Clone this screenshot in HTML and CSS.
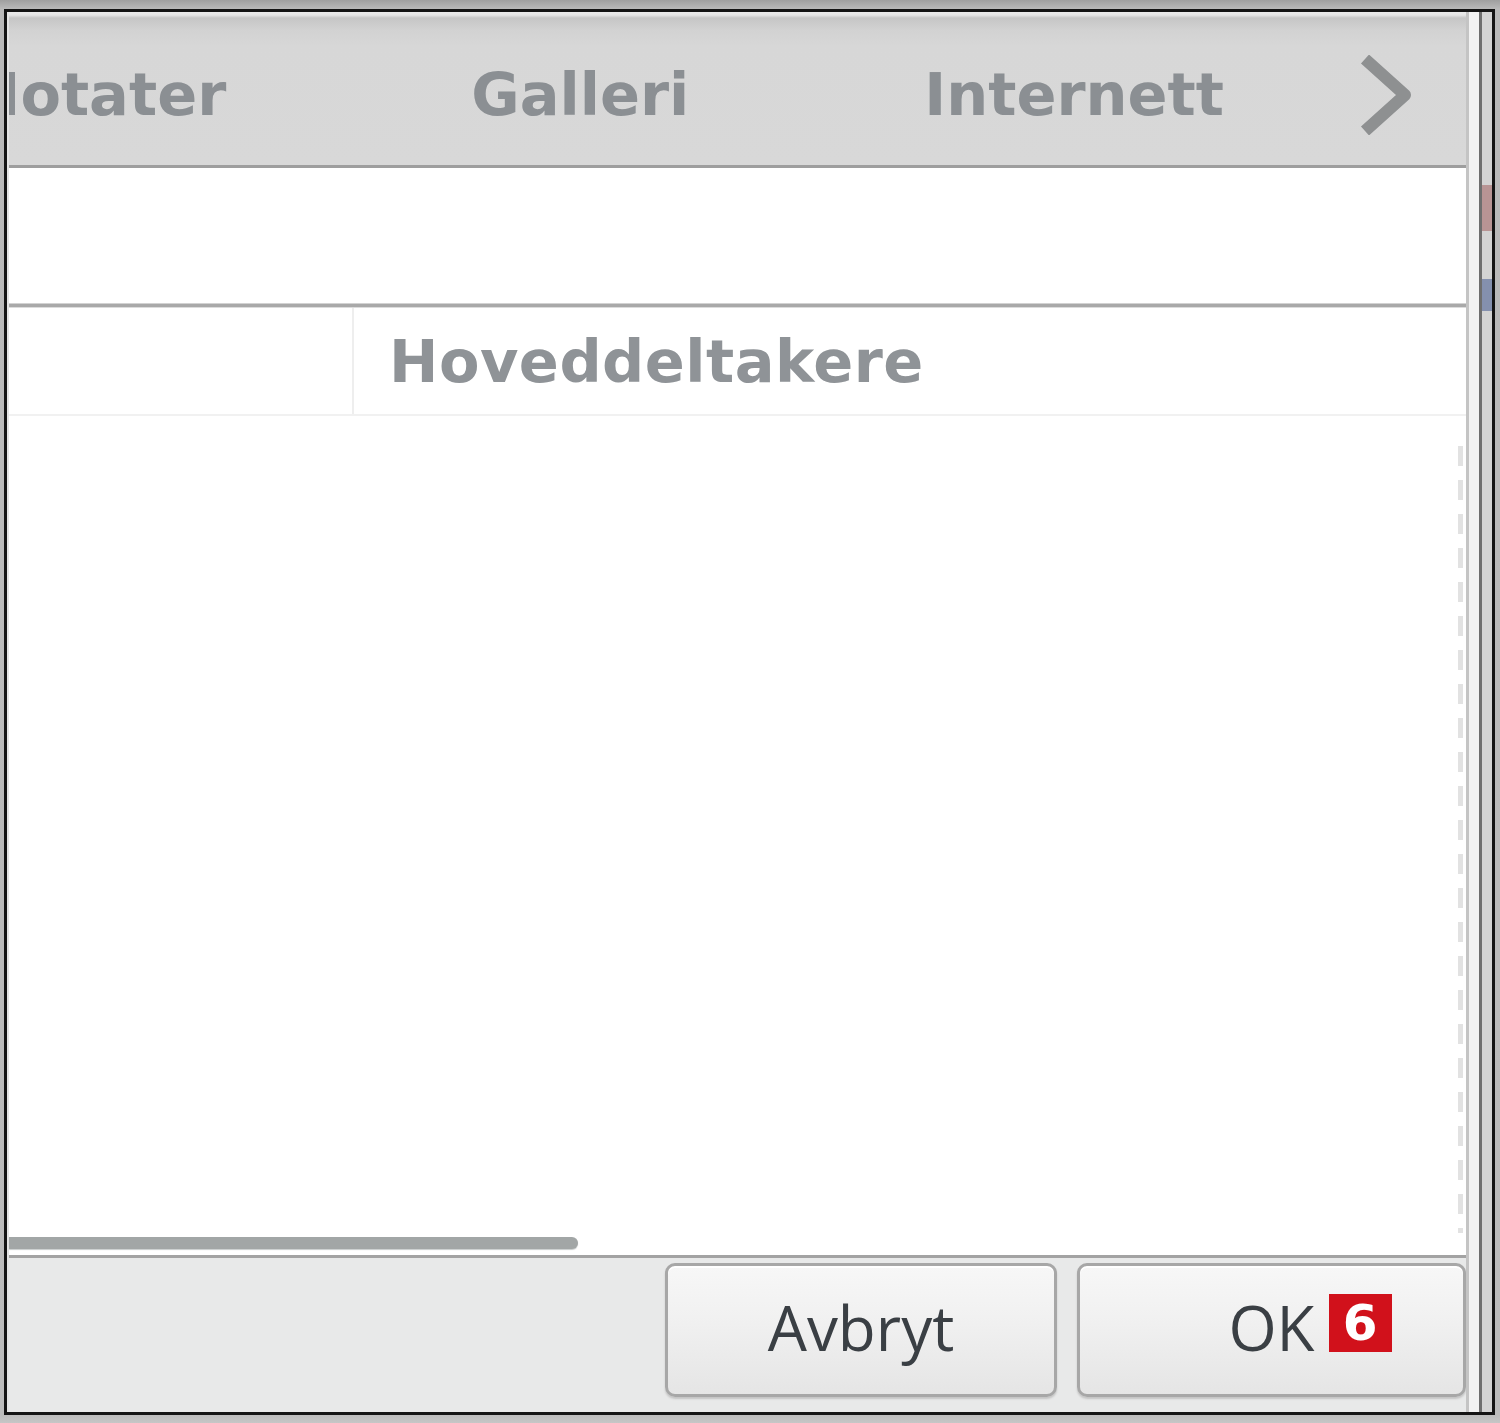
FILE: index.html
```html
<!DOCTYPE html>
<html lang="no">
<head>
<meta charset="utf-8">
<title>Dialog</title>
<link rel="stylesheet" href="styles.css">
</head>
<body>
<div class="window">
  <div class="main">
    <div class="tabbar">
      <span class="tab tab-first">Notater</span>
      <span class="tab tab-gallery">Galleri</span>
      <span class="tab tab-internet">Internett</span>
      <svg class="chevron" width="60" height="80" viewBox="0 0 60 80" aria-hidden="true">
        <path d="M9 4 L49 40 L9 76" fill="none" stroke="#8e9091" stroke-width="12" stroke-linejoin="round"/>
      </svg>
    </div>
    <div class="content">
      <div class="blank"></div>
      <div class="hline"></div>
      <div class="header-row">
        <div class="cell cell-left"></div>
        <div class="cell cell-right">Hoveddeltakere</div>
      </div>
      <div class="body">
        <div class="body-fill"></div>
        <div class="vtrack"></div>
      </div>
      <div class="hscroll"></div>
    </div>
    <div class="footer">
      <button class="btn btn-cancel">Avbryt</button>
      <button class="btn btn-ok"><span class="ok-label">OK<span class="badge">6</span></span></button>
    </div>
  </div>
  <div class="side">
    <div class="side-a"></div>
    <div class="side-b"></div>
    <div class="side-c"></div>
    <div class="side-d">
      <div class="mark mark-red"></div>
      <div class="mark mark-blue"></div>
    </div>
  </div>
</div>
</body>
</html>
```
FILE: styles.css
```css
html, body {
  margin: 0;
  padding: 0;
}
body {
  width: 1500px;
  height: 1423px;
  overflow: hidden;
  background: linear-gradient(#9f9f9f 0px, #b9b9b9 9px, #bcbcbc 1415px, #c6c6c6 1423px);
  font-family: "DejaVu Sans", sans-serif;
}
.window {
  box-sizing: border-box;
  margin: 9px 0 0 4px;
  width: 1491px;
  height: 1406px;
  border: 3px solid #141414;
  display: flex;
  background: #f2f2f2;
}
.main {
  width: 1459px;
  display: flex;
  flex-direction: column;
  border-left: 2px solid #e4e4e4;
  box-sizing: border-box;
}
.tabbar {
  box-sizing: border-box;
  height: 156px;
  flex: none;
  display: flex;
  align-items: center;
  padding-top: 12px;
  overflow: hidden;
  border-bottom: 3px solid #9e9e9e;
  background: linear-gradient(#ebebeb 0px, #e6e6e6 3px, #c6c6c6 6px, #d2d2d2 18px, #d7d7d7 34px, #d8d8d8 100%);
  white-space: nowrap;
}
.tab {
  font-family: "DejaVu Sans", sans-serif;
  font-weight: bold;
  font-size: 59px;
  color: #8b8f93;
  flex: none;
}
.tab-first {
  margin-left: -38px;
}
.tab-gallery {
  margin-left: 245px;
}
.tab-internet {
  margin-left: 235px;
}
.chevron {
  flex: none;
  margin-left: auto;
  margin-right: 50px;
  margin-top: 0;
}
.content {
  flex: 1;
  display: flex;
  flex-direction: column;
  background: #ffffff;
  border-bottom: 3px solid #a3a3a3;
}
.blank {
  height: 135px;
  flex: none;
}
.hline {
  height: 3px;
  flex: none;
  background: #a9a9a9;
  border-top: 1px solid #d2d2d2;
  border-bottom: 1px solid #dcdcdc;
}
.header-row {
  height: 108px;
  flex: none;
  box-sizing: border-box;
  display: flex;
  border-bottom: 2px solid #f1f1f1;
}
.cell {
  display: flex;
  align-items: center;
}
.cell-left {
  width: 343px;
  border-right: 2px solid #eeeeee;
}
.cell-right {
  flex: 1;
  padding-left: 35px;
  font-family: "DejaVu Sans", sans-serif;
  font-weight: bold;
  font-size: 59px;
  letter-spacing: 0.5px;
  color: #8f9397;
}
.body {
  flex: 1;
  display: flex;
}
.body-fill {
  flex: 1;
}
.vtrack {
  width: 5px;
  margin: 16px 3px 4px 0;
  background: repeating-linear-gradient(#ffffff 0px, #ffffff 14px, #e2e2e2 14px, #e2e2e2 34px);
}
.hscroll {
  flex: none;
  width: 569px;
  height: 12px;
  margin-bottom: 6px;
  background: #a2a6a6;
  border-radius: 0 6px 6px 0;
  box-shadow: 0 1px 1px #c8cccc;
}
.footer {
  height: 154px;
  flex: none;
  box-sizing: border-box;
  padding: 5px 0 15px;
  display: flex;
  justify-content: flex-end;
  gap: 20px;
  background: #e8e9e9;
}
.btn {
  box-sizing: border-box;
  height: 134px;
  border: 3px solid #a7a7a7;
  border-radius: 10px;
  background: linear-gradient(#f7f7f7 0%, #f1f1f1 40%, #e5e5e5 100%);
  box-shadow: inset 0 2px 0 #ffffff, 0 2px 2px #c4c4c4;
  font-family: "Open Sans", sans-serif;
  font-size: 62px;
  color: #3a3f44;
  padding: 0 0 6px;
  display: flex;
  align-items: center;
  justify-content: center;
}
.btn-cancel {
  width: 392px;
}
.btn-ok {
  width: 389px;
}
.ok-label {
  position: relative;
}
.badge {
  position: absolute;
  left: calc(100% + 14px);
  top: 9px;
  width: 63px;
  height: 58px;
  background: #d1111b;
  color: #ffffff;
  font-family: "DejaVu Sans", sans-serif;
  font-weight: bold;
  font-size: 50px;
  line-height: 58px;
  text-align: center;
}
.side {
  flex: 1;
  display: flex;
}
.side-a {
  width: 3px;
  background: #c4c4c4;
}
.side-b {
  width: 10px;
  background: #f3f3f3;
}
.side-c {
  width: 3px;
  background: #6e6e6e;
}
.side-d {
  flex: 1;
  background: #d3d3d3;
  display: flex;
  flex-direction: column;
}
.mark {
  width: 100%;
}
.mark-red {
  margin-top: 173px;
  height: 46px;
  background: #b89494;
}
.mark-blue {
  margin-top: 48px;
  height: 32px;
  background: #8490ae;
}
```
